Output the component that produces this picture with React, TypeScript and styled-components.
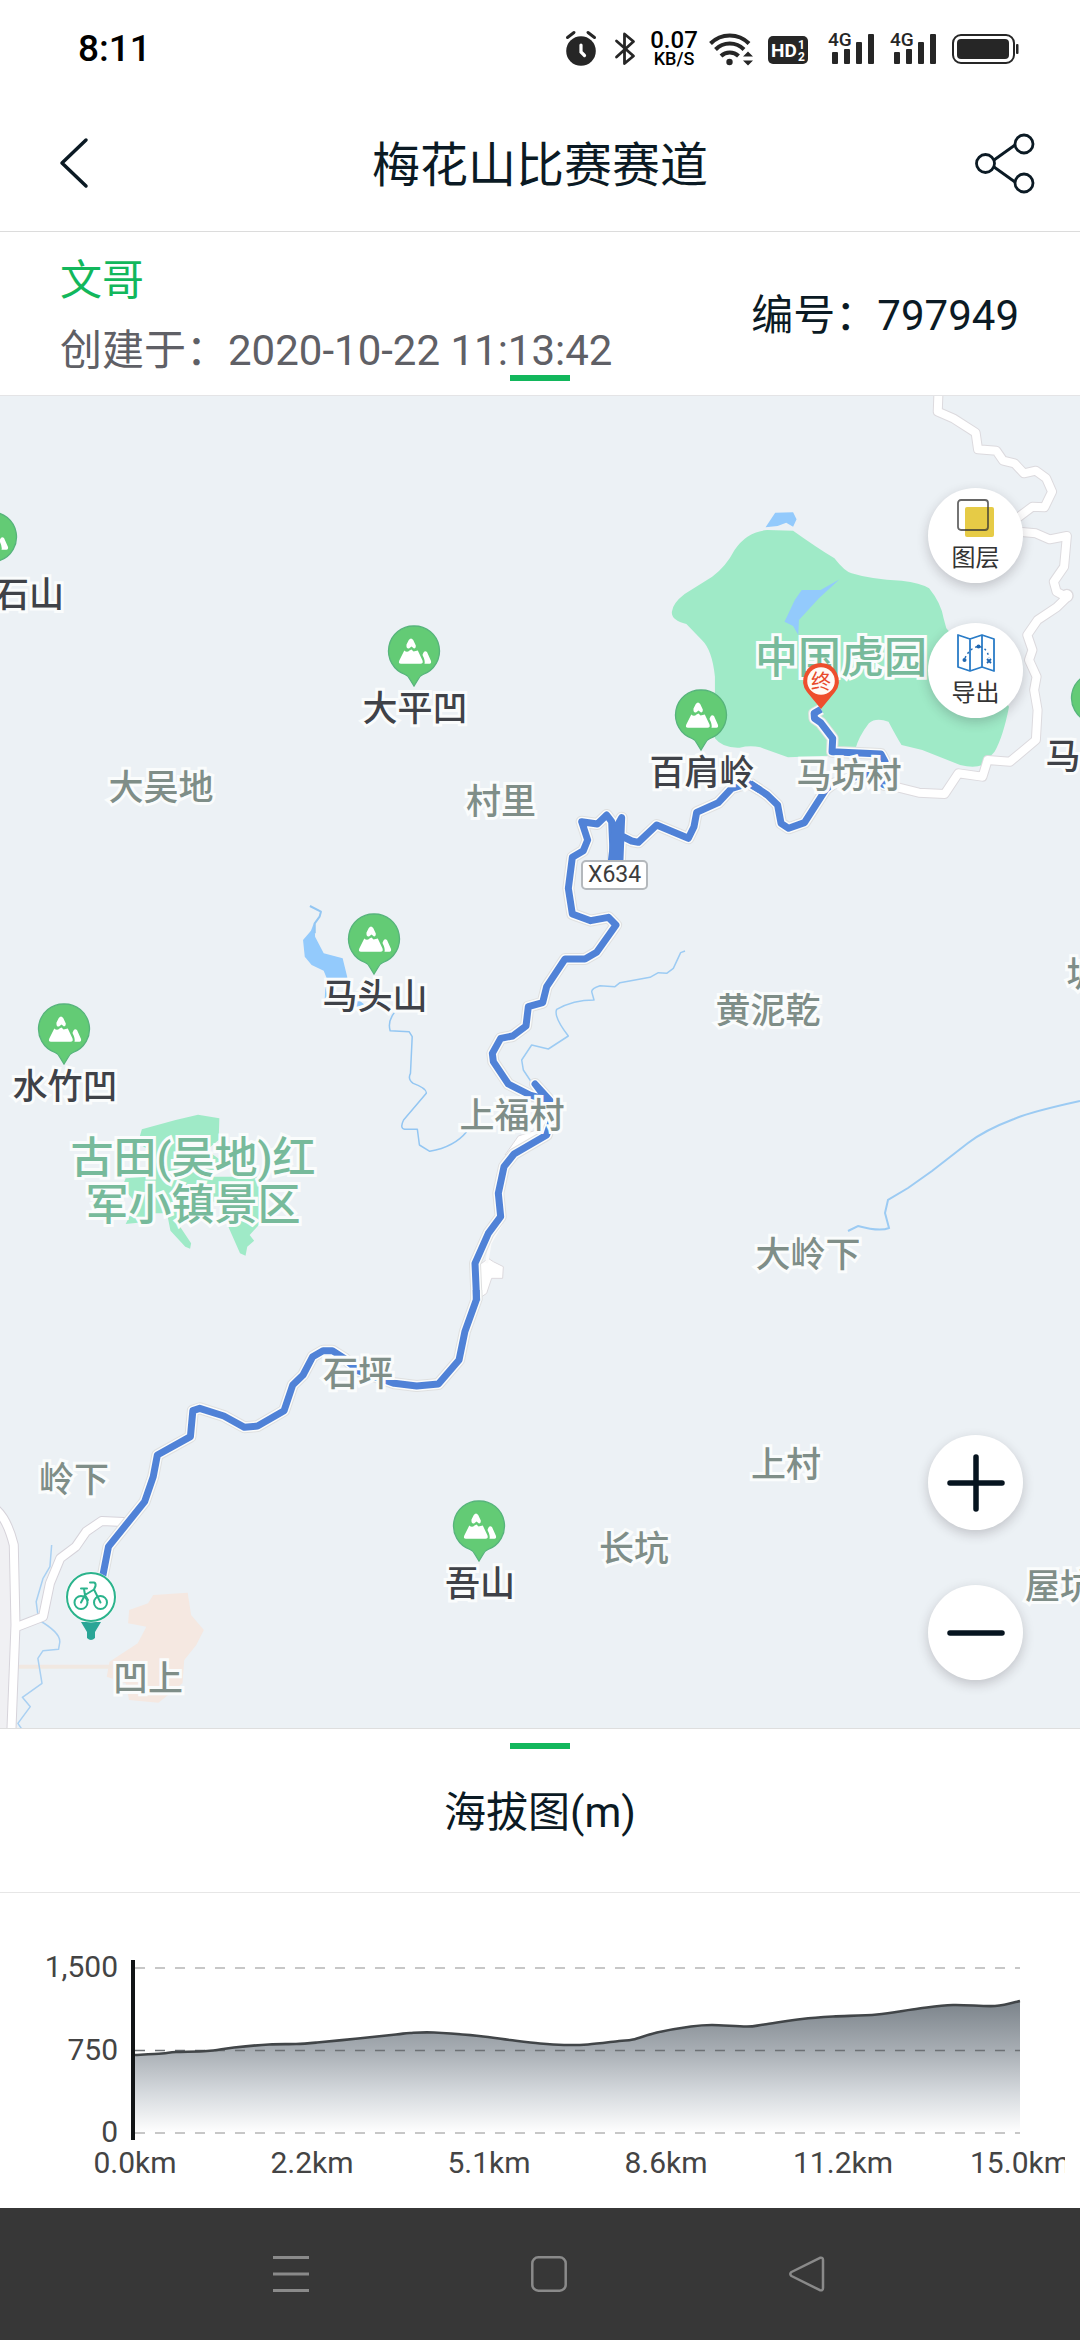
import React from "react";
import styled, { createGlobalStyle } from "styled-components";

const GlobalStyle = createGlobalStyle`
  *, *::before, *::after { box-sizing: border-box; }
  body {
    margin: 0;
    background: #fff;
    color: #0b1a24;
    font-family: Roboto, "Noto Sans CJK SC", sans-serif;
  }
  button { font: inherit; color: inherit; }
  svg { display: block; flex: none; overflow: visible; }
`;

const Page = styled.div`
  display: flex;
  flex-direction: column;
  min-height: 100vh;
  overflow-x: hidden;
`;

/* ---------- status bar ---------- */

const StatusBar = styled.div`
  display: flex;
  align-items: center;
  justify-content: space-between;
  height: 96px;
  padding: 2px 61px 0 78px;
  color: #000;
`;

const Clock = styled.time`
  font-size: 37px;
  font-weight: 500;
  font-kerning: none;
  line-height: 40px;
`;

const StatusIcons = styled.div`
  display: flex;
  align-items: center;
  gap: 10px;
`;

const NetSpeed = styled.div`
  display: flex;
  flex-direction: column;
  align-items: center;
  width: 50px;
  font-weight: 500;
`;

const SpeedValue = styled.span`
  font-size: 24px;
  line-height: 20px;
`;

const SpeedUnit = styled.span`
  font-size: 18px;
  line-height: 18px;
`;

const ink = "#262626";

const AlarmIcon = () => (
  <svg width="39" height="36" viewBox="0 0 39 36">
    <circle cx="15" cy="20" r="14.8" fill={ink} />
    <path d="M1.500 6.500 L8 1.500 M28.500 6.500 L22 1.500" stroke={ink} strokeWidth="3" strokeLinecap="round" />
    <path d="M15 14 V21 L18.500 24.500" fill="none" stroke="#fff" strokeWidth="3.200" strokeLinecap="round" />
  </svg>
);

const BluetoothIcon = () => (
  <svg width="24" height="36" viewBox="0 0 24 36">
    <path d="M1.500 10 L18.500 25 L9.500 32.500 V3 L18.500 10.500 L1.500 26" fill="none" stroke={ink} strokeWidth="2.800" strokeLinejoin="round" strokeLinecap="round" />
  </svg>
);

const WifiIcon = () => (
  <svg width="49" height="36" viewBox="0 0 49 36">
    <g fill="none" stroke={ink} strokeWidth="4">
      <path d="M1.500 12.500 A27 27 0 0 1 40 12.500" />
      <path d="M6.500 18.500 A20 20 0 0 1 35 18.500" />
      <path d="M12 25 A12.500 12.500 0 0 1 29.500 25" />
    </g>
    <circle cx="20.500" cy="31" r="3.200" fill={ink} />
    <path d="M34 25.500 L39 20.500 L44 25.500Z M34 29.500 L39 34.500 L44 29.500Z" fill={ink} />
  </svg>
);

const HdIcon = () => (
  <svg width="50" height="36" viewBox="0 0 50 36">
    <rect x="0" y="5" width="40" height="28" rx="5" fill={ink} />
    <g fill="#fff" fontFamily="Roboto, sans-serif" fontWeight="700">
      <text x="3" y="26" fontSize="19">HD</text>
      <text x="30" y="18" fontSize="12">1</text>
      <text x="30" y="30" fontSize="12">2</text>
    </g>
  </svg>
);

const SignalIcon = () => (
  <svg width="52" height="36" viewBox="0 0 52 36">
    <text x="0" y="15" fontSize="19" fontWeight="500" fontFamily="Roboto, sans-serif" fill={ink}>4G</text>
    <g fill={ink}>
      <rect x="4" y="21" width="6" height="12" rx="1" />
      <rect x="16" y="18" width="6" height="15" rx="1" />
      <rect x="28" y="11" width="6" height="22" rx="1" />
      <rect x="40" y="3" width="6" height="30" rx="1" />
    </g>
  </svg>
);

const BatteryIcon = () => (
  <svg width="67" height="36" viewBox="0 0 67 36">
    <rect x="1" y="4" width="61" height="28" rx="8" fill="none" stroke={ink} strokeWidth="2" />
    <rect x="5" y="8" width="52" height="20" rx="4" fill={ink} />
    <rect x="64" y="13" width="2.500" height="10" rx="1" fill={ink} />
  </svg>
);

/* ---------- header ---------- */

const Header = styled.header`
  display: flex;
  align-items: center;
  justify-content: space-between;
  height: 136px;
  padding: 0 38px 2px;
  border-bottom: 1px solid #dcdcdc;
`;

const Title = styled.h1`
  margin: 0;
  padding-top: 6px;
  font-size: 48px;
  font-weight: 400;
  line-height: 64px;
`;

const IconButton = styled.button`
  display: flex;
  align-items: center;
  justify-content: center;
  width: 74px;
  height: 74px;
  padding: 0;
  border: 0;
  background: none;
`;

/* ---------- route summary ---------- */

const Summary = styled.section`
  position: relative;
  display: flex;
  align-items: center;
  justify-content: space-between;
  height: 164px;
  padding: 5px 61px 0 60px;
  border-bottom: 1px solid #e4e4e6;
  font-size: 42px;
  line-height: 70px;
`;

const Author = styled.div`
  color: #12b75c;
`;

const Created = styled.div`
  color: #5f6066;
  font-kerning: none;
`;

const Handle = styled.i<{ $edge: "top" | "bottom" }>`
  position: absolute;
  ${(p) => p.$edge}: 14px;
  left: 50%;
  width: 60px;
  height: 6px;
  margin-left: -30px;
  background: #12b75c;
`;

/* ---------- map ---------- */

const MapView = styled.main`
  position: relative;
  flex: 1 0 1332px;
  overflow: hidden;
  background: #ecf1f5;
`;

const MapCanvas = styled.div`
  position: absolute;
  top: 0;
  left: 50%;
  width: 1080px;
  height: 1332px;
  margin-left: -540px;
`;

type Tone = "peak" | "village" | "park";

const toneColor: Record<Tone, string> = {
  peak: "#3f4248",
  village: "#7f8e88",
  park: "#77ba9b",
};

const Label = styled.span<{ $x: number; $y: number; $tone: Tone }>`
  position: absolute;
  left: ${(p) => p.$x}px;
  top: ${(p) => p.$y - 394}px;
  transform: translate(-50%, -50%);
  color: ${(p) => toneColor[p.$tone]};
  font-size: ${(p) => (p.$tone === "park" ? 43 : 35)}px;
  line-height: ${(p) => (p.$tone === "park" ? 47 : 40)}px;
  font-weight: 500;
  text-align: center;
  white-space: pre;
  -webkit-text-stroke: 6px #fafcfc;
  paint-order: stroke fill;
`;

const Pin = styled.span<{ $x: number; $y: number }>`
  position: absolute;
  left: ${(p) => p.$x - 26}px;
  top: ${(p) => p.$y - 396 - 26}px;
`;

const RoadSign = styled.span`
  position: absolute;
  left: 581px;
  top: 464px;
  padding: 0 5px;
  border: 2px solid #b4b8bc;
  border-radius: 5px;
  background: #fff;
  color: #3c3c3c;
  font-size: 23px;
  line-height: 26px;
`;

const EndText = styled.span`
  position: absolute;
  left: 0;
  top: 8px;
  width: 100%;
  color: #e8492b;
  font-size: 20px;
  line-height: 24px;
  text-align: center;
`;

const EndPin = styled.span`
  position: absolute;
  left: 802px;
  top: 266px;
  width: 38px;
`;

const StartPin = styled.span`
  position: absolute;
  left: 65px;
  top: 1174px;
`;

const ToolStack = styled.div<{ $top?: number; $bottom?: number; $gap: number }>`
  position: absolute;
  right: 57px;
  ${(p) => (p.$top !== undefined ? `top: ${p.$top}px;` : "")}
  ${(p) => (p.$bottom !== undefined ? `bottom: ${p.$bottom}px;` : "")}
  display: flex;
  flex-direction: column;
  gap: ${(p) => p.$gap}px;
`;

const RoundButton = styled.button`
  display: flex;
  flex-direction: column;
  align-items: center;
  justify-content: center;
  width: 95px;
  height: 95px;
  padding: 0;
  border: 0;
  border-radius: 50%;
  background: #fff;
  box-shadow: 0 4px 12px rgba(40, 30, 40, 0.22);
  color: #333;
`;

const ToolName = styled.span`
  padding-top: 6px;
  font-size: 24px;
  line-height: 30px;
`;

const MountainPin = ({ x, y }: { x: number; y: number }) => (
  <Pin $x={x} $y={y}>
    <svg width="52" height="63" viewBox="0 0 52 63">
      <path d="M26 1 A25 25 0 0 0 17 49.500 Q20.500 51 22 54.500 L26 61 L30 54.500 Q31.500 51 35 49.500 A25 25 0 0 0 26 1Z" fill="#63cb75" stroke="#57b47c" strokeWidth="1.300" />
      <path d="M18.500 19.500 L20.800 15 Q23 12 25.200 15 L27.800 20.500 Q28 23.500 26 23.500 L23.500 21.500 L21 23.500 Q18 24 18.500 19.500Z" fill="#fff" />
      <path d="M16.300 25.500 Q19 28 21.500 25.500 L23.500 24.500 L25.500 26.500 L29.800 25.500 L34.500 35.500 Q35.500 38.700 32.500 38.700 H13 Q10 38.700 11.300 35.500Z" fill="#fff" />
      <path d="M34.500 30 Q36 24.500 39 27 L43 36 Q43.500 38.700 41.500 38.700 H36.500 Q37.500 36 34.500 30Z" fill="#fff" />
    </svg>
  </Pin>
);

const SHEET_NE = "translate(540 390) scale(0.34436 0.33333)";
const SHEET_W = "translate(0 860) scale(0.34436 0.33333)";
const SHEET_MID = "translate(440 780) scale(0.33333)";
const SHEET_SW = "translate(0 1290) scale(0.34436 0.33333)";

const ROADS_NE = [
  "M1157 10 L1155 65 L1200 85 L1265 128 L1272 178 L1325 182 L1345 212 L1378 220 L1405 250 L1440 242 L1470 265 L1487 305 L1465 352 L1430 350 L1385 385",
  "M1390 425 L1440 430 L1480 448 L1530 438 L1522 530 L1492 575 L1500 605 L1530 622 L1500 652 L1445 690 L1415 735 L1430 780 L1420 810 L1442 860 L1435 900 L1445 960 L1440 1050 L1365 1115 L1300 1110 L1285 1160 L1215 1150 L1175 1212 L1100 1208 L1030 1190",
];
const ROADS_SW = [
  "M-10 660 Q22 690 40 765 L45 1005 L33 1325",
  "M50 1010 L125 980 L145 880 L175 805 L220 770 L250 725 L295 693 L375 697",
];

const ROUTE_NE =
  "M816 958 L796 970 L797 985 L815 998 L850 1045 L848 1085 L990 1092 L1002 1115 L1000 1185 L945 1152 L850 1182 L830 1198 L768 1298 L722 1315 L700 1300 L690 1245 L660 1215 L610 1180";
const ROUTE_MID =
  "M960 30 L925 10 L875 25 L835 68 L770 97 L762 140 L745 175 L650 135 L595 187 L575 183 L545 168 L530 140 L545 113 L540 238 L520 238 L515 125 L500 105 L472 132 L425 125 L443 180 L430 212 L397 232 L385 325 L397 402 L452 422 L505 412 L528 435 L470 517 L435 537 L375 537 L320 620 L308 668 L265 680 L258 738 L218 768 L182 775 L157 820 L160 845 L205 912 L270 945 L330 962 L285 912 L325 965 L335 1020 L320 1065 L222 1122 L192 1160 L175 1240 L182 1310 L145 1360 L105 1450 L110 1562";
const ROUTE_SW =
  "M1383 0 L1383 30 L1350 125 L1333 210 L1273 282 L1210 288 L1145 280 L1040 242 L1000 205 L965 182 L938 182 L908 200 L880 255 L850 285 L825 362 L748 408 L710 412 L650 378 L580 355 L560 362 L553 440 L457 495 L445 560 L420 635 L315 770 L298 860";

const ROUTES: [string, string][] = [
  [SHEET_NE, ROUTE_NE],
  [SHEET_MID, ROUTE_MID],
  [SHEET_SW, ROUTE_SW],
];

const Line = ({ d, color, width }: { d: string; color: string; width: number }) => (
  <path d={d} fill="none" stroke={color} strokeWidth={width} strokeLinejoin="round" vectorEffect="non-scaling-stroke" />
);

const BaseMap = () => (
  <svg width="1080" height="1332" viewBox="0 396 1080 1332" aria-hidden="true">
    <g transform={SHEET_SW}>
      <path d="M0 660 Q22 690 40 765 L45 1005 L33 1325 H0Z" fill="#f0f0f3" />
      <path d="M445 915 L545 908 L555 975 L592 1020 L570 1065 L535 1110 L530 1180 L460 1238 L375 1230 L365 1180 L310 1160 L318 1115 L400 1060 L425 1010 L372 1000 L375 960 L430 940Z" fill="#f5e8e1" />
      <Line d="M50 1130 H330" color="#f1e8e1" width={4} />
      <Line d="M150 765 L145 830 L125 865 L105 935 L112 990 Q180 1030 173 1060 L170 1078 L125 1082 L110 1105 L122 1180 L65 1222 L88 1250 L52 1300 L65 1320" color="#a9d0f2" width={1.5} />
    </g>

    <g transform={SHEET_NE}>
      <path
        d="M383 665 Q385 640 420 612 L500 560 Q540 530 565 480 Q600 425 660 420 L735 422 Q800 470 855 505 Q885 545 905 550 Q960 568 1050 572 Q1105 578 1130 595 Q1165 640 1172 685 L1180 715 L1250 800 L1362 950 Q1345 1040 1320 1085 L1285 1125 Q1260 1135 1220 1125 L1110 1080 L1050 1065 Q1035 1040 1012 995 Q975 982 955 1000 Q925 1040 915 1080 L900 1095 L720 1102 L640 1072 Q610 1065 580 1073 Q530 1075 508 1045 L508 860 Q500 780 470 750 L425 702 Q380 690 383 665Z"
        fill="#9feac7"
      />
      <path d="M655 412 L683 368 L735 367 L745 388 L735 410 L715 398 L690 408Z M870 568 L815 600 L760 600 L740 630 L710 695 L735 708 L750 735 L752 690 L810 625Z" fill="#93cafc" />
    </g>

    <g transform={SHEET_W}>
      <path d="M400 850 L412 808 L510 780 L575 764 L637 775 L635 840 L600 870 L640 900 L620 950 L750 950 L765 990 L755 1060 L760 1085 L725 1125 L738 1142 L718 1160 L713 1187 L697 1180 L665 1105 L640 1040 L600 1010 L560 1050 L510 1080 L555 1150 L552 1166 L538 1160 L495 1112 L485 1060 L440 1060 L400 1088 L365 1092 L395 1030 L355 980 L365 955 L430 950 L450 880Z" fill="#9feac7" />
      <path d="M913 185 L903 212 L880 240 L885 290 L905 315 L940 332 L950 358 L1010 358 L995 295 L940 280 L915 230Z M945 380 L950 410 L943 415Z M1035 415 L1060 435 L1032 445Z" fill="#93cafc" />
      <Line d="M900 138 L932 155 L928 170 L914 190 L914 220" color="#93c6f2" width={2} />
      <Line d="M1145 458 Q1125 485 1133 512 L1188 515 L1197 530 L1192 640 Q1183 658 1200 670 Q1240 685 1238 700 L1172 780 Q1160 805 1175 808 L1212 808 L1218 855 L1248 874 Q1320 860 1355 815" color="#93c6f2" width={1.5} />
    </g>

    <g transform={SHEET_MID}>
      <Line d="M735 513 L722 518 L700 565 L680 580 L655 578 L630 592 L540 608 L525 620 L480 617 Q455 625 455 635 L462 660 Q400 660 350 688 Q340 710 385 768 L325 807 L275 795 L245 840 L250 870 L280 915" color="#9ccbf3" width={1.5} />
      <path d="M195 1125 L235 1068 L320 1040 L320 1070 L215 1120Z M125 1450 L145 1435 L160 1445 L190 1460 L188 1495 L155 1495 L140 1540 L118 1555 L110 1450Z" fill="#fff" stroke="#dcd9dd" strokeWidth="3" />
      <Line d="M185 1330 L150 1390 L140 1450" color="#fbfbfb" width={3} />
    </g>
    <path d="M1080 1101 Q1030 1112 1014 1119 Q985 1130 968 1143 L932 1171 L908 1188 L888 1200 L885 1213 L889 1228 Q880 1232 858 1226 L848 1231" fill="none" stroke="#9ccbf3" strokeWidth="2" />

    <g transform={SHEET_NE}>
      {ROADS_NE.map((d) => <Line key={d} d={d} color="#dcdade" width={10} />)}
      <ellipse cx="1530" cy="617" rx="18" ry="19" fill="#fff" stroke="#dcdade" strokeWidth="4" />
      {ROADS_NE.map((d) => <Line key={d} d={d} color="#fff" width={8} />)}
    </g>
    <g transform={SHEET_SW}>
      {ROADS_SW.map((d) => <Line key={d} d={d} color="#d6d3da" width={10} />)}
      {ROADS_SW.map((d) => <Line key={d} d={d} color="#fff" width={8} />)}
    </g>

    {ROUTES.map(([t, d]) => <g key={d} transform={t}><Line d={d} color="#dfe0e0" width={12} /></g>)}
    {ROUTES.map(([t, d]) => <g key={d} transform={t}><Line d={d} color="#fbfcfb" width={10} /></g>)}
    {ROUTES.map(([t, d]) => <g key={d} transform={t}><Line d={d} color="#5082d7" width={7} /></g>)}
    <path d="M616 826 L617 860 L612 860Z" stroke="#5082d7" strokeWidth="8" />
  </svg>
);

const PEAKS: [string, number, number][] = [
  ["大平凹", 414, 651],
  ["百肩岭", 701, 715],
  ["马头山", 374, 939],
  ["水竹凹", 64, 1029],
  ["吾山", 479, 1526],
];

const VILLAGES: [string, number, number][] = [
  ["大吴地", 161, 787],
  ["村里", 501, 801],
  ["马坊村", 849, 775],
  ["上福村", 512, 1115],
  ["黄泥乾", 768, 1010],
  ["大岭下", 808, 1254],
  ["石坪", 358, 1373],
  ["岭下", 74, 1479],
  ["凹上", 148, 1678],
  ["上村", 786, 1464],
  ["长坑", 634, 1548],
  ["屋坑", 1060, 1586],
  ["坡", 1084, 974],
];

/* ---------- elevation ---------- */

const ElevationHead = styled.section`
  position: relative;
  display: flex;
  align-items: center;
  justify-content: center;
  height: 165px;
  padding-top: 5px;
  border-top: 1px solid #dedede;
  border-bottom: 1px solid #e6e6e6;
`;

const ElevationTitle = styled.h2`
  margin: 0;
  font-size: 42px;
  font-weight: 400;
  line-height: 60px;
`;

const ChartPanel = styled.section`
  display: grid;
  grid-template-columns: 103px 1fr;
  column-gap: 13px;
  height: 315px;
  margin: 0 15px;
  padding: 59px 45px 0 0;
  overflow: hidden;
  color: #444;
  font-size: 30px;
  line-height: 30px;
`;

const YAxis = styled.div`
  display: flex;
  flex-direction: column;
  justify-content: space-between;
  align-items: flex-end;
  height: 195px;
`;

const Plot = styled.div`
  padding-top: 8px;
`;

const Curve = styled.svg`
  width: 100%;
  height: 180px;
`;

const XAxis = styled.div`
  display: flex;
  justify-content: space-between;
  padding-top: 8px;
  margin-left: 4px;
`;

const XTick = styled.span`
  display: flex;
  justify-content: center;
  width: 0;
  white-space: nowrap;
`;

const ALTITUDES: [number, number][] = [
  [0, 95], [27, 93.5], [41, 92], [72, 91], [99, 87.5], [134, 84.5], [161, 84], [182, 82.5],
  [223, 78.5], [261, 74.5], [275, 73], [299, 72.5], [344, 76], [375, 80], [405, 83.5],
  [429, 85], [453, 84.5], [484, 81], [498, 79.5], [522, 72.5], [556, 66.5], [577, 65],
  [612, 66.5], [629, 64.5], [667, 59], [698, 56.5], [742, 54.5], [784, 48.5], [818, 45],
  [860, 46], [885, 41],
];

const curvePath = ALTITUDES.map(([x, y], i) => {
  if (i === 0) return `M${x} ${y}`;
  const [px, py] = ALTITUDES[i - 1];
  const [ppx, ppy] = ALTITUDES[Math.max(0, i - 2)];
  const [nx, ny] = ALTITUDES[Math.min(ALTITUDES.length - 1, i + 1)];
  return `C${px + (x - ppx) / 6} ${py + (y - ppy) / 6} ${x - (nx - px) / 6} ${y - (ny - py) / 6} ${x} ${y}`;
}).join(" ");

const ElevationCurve = () => (
  <Curve viewBox="-4 0 889 180" preserveAspectRatio="none" role="img" aria-label="海拔图">
    <defs>
      <linearGradient id="relief" gradientUnits="userSpaceOnUse" x1="0" y1="41" x2="0" y2="173">
        <stop offset="0" stopColor="#7b838a" />
        <stop offset="0.37" stopColor="#a7adb3" />
        <stop offset="0.7" stopColor="#d6dade" />
        <stop offset="1" stopColor="#ffffff" />
      </linearGradient>
    </defs>
    <path d={`${curvePath} V173 H0Z`} fill="url(#relief)" />
    <g strokeWidth="1.500" strokeDasharray="10 10">
      <path d="M0 8 H885" stroke="#b5b5b5" />
      <path d="M0 90.500 H885" stroke="#6d7175" />
      <path d="M0 173 H885" stroke="#b5b5b5" />
    </g>
    <path d={curvePath} fill="none" stroke="#414548" strokeWidth="2.600" />
    <rect x="-4" y="0" width="4" height="180" fill="#111416" />
  </Curve>
);

/* ---------- system navigation ---------- */

const SystemNav = styled.nav`
  display: flex;
  align-items: center;
  justify-content: center;
  gap: 184px;
  height: 132px;
  padding-left: 18px;
  background: #373737;
  color: #8a8a8a;
`;

export default function App() {
  return (
    <Page>
      <GlobalStyle />
      <StatusBar>
        <Clock>8:11</Clock>
        <StatusIcons>
          <AlarmIcon />
          <BluetoothIcon />
          <NetSpeed>
            <SpeedValue>0.07</SpeedValue>
            <SpeedUnit>KB/S</SpeedUnit>
          </NetSpeed>
          <WifiIcon />
          <HdIcon />
          <SignalIcon />
          <SignalIcon />
          <BatteryIcon />
        </StatusIcons>
      </StatusBar>

      <Header>
        <IconButton aria-label="返回">
          <svg width="30" height="50" viewBox="0 0 30 50">
            <path d="M26 2 L2 25 L26 48" fill="none" stroke="#0b1a24" strokeWidth="3.500" strokeLinecap="round" strokeLinejoin="round" />
          </svg>
        </IconButton>
        <Title>梅花山比赛赛道</Title>
        <IconButton aria-label="分享">
          <svg width="60" height="60" viewBox="0 0 60 60" fill="none" stroke="#0b1a24" strokeWidth="2.800">
            <circle cx="10.500" cy="30.500" r="9" />
            <circle cx="49" cy="11" r="9" />
            <circle cx="49" cy="50" r="9" />
            <path d="M19 27 L40 12 M19 34 L40 49" />
          </svg>
        </IconButton>
      </Header>

      <Summary>
        <div>
          <Author>文哥</Author>
          <Created>创建于：2020-10-22 11:13:42</Created>
        </div>
        <div>编号：797949</div>
        <Handle $edge="bottom" />
      </Summary>

      <MapView>
        <MapCanvas>
          <BaseMap />
          <Label $x={841} $y={656} $tone="park">中国虎园</Label>
          <Label $x={193} $y={1180} $tone="park">{"古田(吴地)红\n军小镇景区"}</Label>
          {VILLAGES.map(([name, x, y]) => (
            <Label key={name} $x={x} $y={y} $tone="village">{name}</Label>
          ))}
          {PEAKS.map(([name, x, y]) => (
            <React.Fragment key={name}>
              <MountainPin x={x} y={y} />
              <Label $x={x + 1} $y={y + 57} $tone="peak">{name}</Label>
            </React.Fragment>
          ))}
          <MountainPin x={-9} y={537} />
          <Label $x={29} $y={594} $tone="peak">石山</Label>
          <MountainPin x={1097} y={698} />
          <Label $x={1063} $y={756} $tone="peak">马</Label>
          <RoadSign>X634</RoadSign>
          <EndPin>
            <svg width="38" height="48" viewBox="0 0 38 48">
              <path d="M19 1 A18 18 0 0 0 5 30 L19 47 L33 30 A18 18 0 0 0 19 1Z" fill="#ee4e2d" />
              <circle cx="19" cy="19" r="13.800" fill="#fffaf6" />
            </svg>
            <EndText>终</EndText>
          </EndPin>
          <StartPin>
            <svg width="52" height="72" viewBox="0 0 52 72">
              <path d="M16 52 H36 L30 62 V68 Q26 72 22 68 V62Z" fill="#2aa596" />
              <circle cx="26" cy="27" r="25.500" fill="#fff" opacity="0.850" />
              <circle cx="26" cy="27" r="24" fill="#fff" stroke="#2bb38c" strokeWidth="2" />
              <g fill="none" stroke="#2bb38c" strokeWidth="2">
                <circle cx="16" cy="32.500" r="6.500" />
                <circle cx="35.500" cy="32.500" r="6.500" />
                <path d="M16 32.500 L20 25 L29 19.500 L35.500 32.500 M16 18.500 H22 M19 19 L20 25 L23 30 M25 12.500 H29 Q31 13 30.500 16 L29 19.500" strokeLinecap="round" strokeLinejoin="round" />
              </g>
            </svg>
          </StartPin>
        </MapCanvas>

        <ToolStack $top={92} $gap={40}>
          <RoundButton>
            <svg width="38" height="38" viewBox="0 0 38 38">
              <rect x="8" y="8" width="29" height="30" rx="2" fill="#e6cb46" />
              <rect x="1" y="1" width="30" height="30" rx="3" fill="none" stroke="#333" strokeOpacity="0.750" strokeWidth="1.800" />
            </svg>
            <ToolName>图层</ToolName>
          </RoundButton>
          <RoundButton>
            <svg width="38" height="38" viewBox="0 0 38 38">
              <path d="M1 1 L13 5 L25 1 L37 5 V37 L25 33 L13 37 L1 33Z M13 5 V37 M25 1 V33" fill="none" stroke="#2a7cc7" strokeWidth="1.800" strokeLinejoin="round" />
              <path d="M8 24 Q13 14 21 12.500 Q30 13 32 24" fill="none" stroke="#2a6fb5" strokeWidth="1.500" strokeDasharray="2 3" />
              <circle cx="7.500" cy="26" r="2" fill="#1f66b0" />
              <circle cx="21.500" cy="12.500" r="2" fill="#1f66b0" />
              <path d="M30 25 L34 29 M34 25 L30 29" stroke="#1f66b0" strokeWidth="1.800" />
            </svg>
            <ToolName>导出</ToolName>
          </RoundButton>
        </ToolStack>

        <ToolStack $bottom={48} $gap={55}>
          <RoundButton aria-label="放大">
            <svg width="58" height="58" viewBox="0 0 58 58" stroke="#06141f" strokeWidth="5.500" strokeLinecap="round">
              <path d="M3 29 H55 M29 3 V55" />
            </svg>
          </RoundButton>
          <RoundButton aria-label="缩小">
            <svg width="58" height="58" viewBox="0 0 58 58" stroke="#06141f" strokeWidth="5.500" strokeLinecap="round">
              <path d="M3 29 H55" />
            </svg>
          </RoundButton>
        </ToolStack>
      </MapView>

      <ElevationHead>
        <Handle $edge="top" />
        <ElevationTitle>海拔图(m)</ElevationTitle>
      </ElevationHead>

      <ChartPanel>
        <YAxis>
          <span>1,500</span>
          <span>750</span>
          <span>0</span>
        </YAxis>
        <Plot>
          <ElevationCurve />
          <XAxis>
            {["0.0km", "2.2km", "5.1km", "8.6km", "11.2km", "15.0km"].map((t) => (
              <XTick key={t}>{t}</XTick>
            ))}
          </XAxis>
        </Plot>
      </ChartPanel>

      <SystemNav>
        <IconButton aria-label="最近任务">
          <svg width="36" height="36" viewBox="0 0 36 36" stroke="currentColor" strokeWidth="3">
            <path d="M0 1.500 H36 M0 18 H36 M0 34.500 H36" />
          </svg>
        </IconButton>
        <IconButton aria-label="主屏幕">
          <svg width="36" height="36" viewBox="0 0 36 36" fill="none" stroke="currentColor" strokeWidth="2.500">
            <rect x="1.300" y="1.300" width="33.400" height="33.400" rx="6" />
          </svg>
        </IconButton>
        <IconButton aria-label="后退">
          <svg width="36" height="36" viewBox="0 0 36 36" fill="none" stroke="currentColor" strokeWidth="2.500" strokeLinejoin="round">
            <path d="M31 1.800 Q34 1 34 4 V32 Q34 35 31 34.200 L2.500 20 Q0 18 2.500 16Z" />
          </svg>
        </IconButton>
      </SystemNav>
    </Page>
  );
}
